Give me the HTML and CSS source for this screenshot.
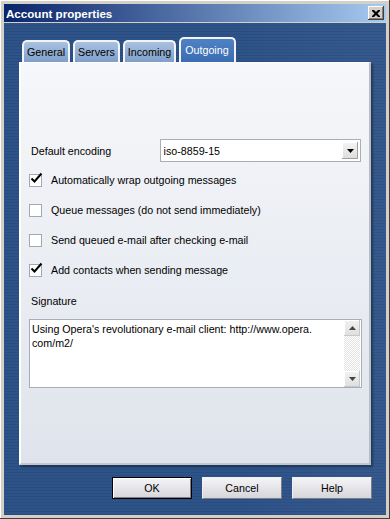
FILE: index.html
```html
<!DOCTYPE html>
<html lang="en">
<head>
  <meta charset="UTF-8">
  <title>Account properties</title>
  <link rel="stylesheet" href="styles.css">
</head>
<body>
  <div class="window">
    <!-- Title bar -->
    <div class="titlebar">
      <span class="title">Account properties</span>
      <button class="close">
        <svg width="8" height="7" viewBox="0 0 8 7"><path d="M0 0h2l2 2 2-2h2v1l-2.5 2.5 2.5 2.5v1h-2l-2-2-2 2h-2v-1l2.5-2.5-2.5-2.5z" fill="#000"/></svg>
      </button>
    </div>

    <div class="client">
      <div class="tabs">
        <div class="tab">General</div>
        <div class="tab">Servers</div>
        <div class="tab">Incoming</div>
        <div class="tab active">Outgoing</div>
      </div>

      <!-- Outgoing page -->
      <div class="panel">
        <div class="encoding">
          <span class="label">Default encoding</span>
          <div class="select">
            <span class="value">iso-8859-15</span>
            <span class="drop"><svg width="7" height="4" viewBox="0 0 7 4"><path d="M0 0h7l-3.5 4z" fill="#000"/></svg></span>
          </div>
        </div>

        <div class="check">
          <span class="box"><svg width="14" height="14" viewBox="0 0 14 14"><path d="M2.5 6.5l3 3 7-8" fill="none" stroke="#000" stroke-width="2"/></svg></span>
          <span>Automatically wrap outgoing messages</span>
        </div>
        <div class="check">
          <span class="box"></span>
          <span>Queue messages (do not send immediately)</span>
        </div>
        <div class="check">
          <span class="box"></span>
          <span>Send queued e-mail after checking e-mail</span>
        </div>
        <div class="check">
          <span class="box"><svg width="14" height="14" viewBox="0 0 14 14"><path d="M2.5 6.5l3 3 7-8" fill="none" stroke="#000" stroke-width="2"/></svg></span>
          <span>Add contacts when sending message</span>
        </div>

        <div class="sig-label">Signature</div>
        <div class="textbox">
          <div class="text">Using Opera's revolutionary e-mail client: http://www.opera.<br>com/m2/</div>
          <div class="scrollbar">
            <span class="arrow"><svg width="7" height="4" viewBox="0 0 7 4"><path d="M0 4h7l-3.5-4z" fill="#444"/></svg></span>
            <span class="track"></span>
            <span class="arrow"><svg width="7" height="4" viewBox="0 0 7 4"><path d="M0 0h7l-3.5 4z" fill="#444"/></svg></span>
          </div>
        </div>
      </div>

      <div class="buttons">
        <button class="btn default">OK</button>
        <button class="btn">Cancel</button>
        <button class="btn">Help</button>
      </div>
    </div>
  </div>
</body>
</html>
```

FILE: styles.css
```css
/* Global styles */
body {
  margin: 0;
  font-family: "Liberation Sans", Arial, sans-serif;
  font-size: 10.7px;
  color: #000;
  background: #d4d0c8;
}

/* Window frame */
.window {
  width: 390px;
  height: 519px;
  box-sizing: border-box;
  padding: 4px;
  background: #d4d0c8;
  box-shadow: inset -1px -1px 0 #404040, inset 1px 1px 0 #ffffff;
  display: flex;
  flex-direction: column;
}

.titlebar {
  height: 18px;
  background: linear-gradient(to right, #0a246a, #a6caf0);
  display: flex;
  align-items: center;
  justify-content: space-between;
  padding: 0 2px 0 2px;
}

.title {
  color: #fff;
  font-weight: bold;
  font-size: 11.6px;
}

.close {
  width: 16px;
  height: 14px;
  padding: 0;
  margin: 0;
  background: #d4d0c8;
  border: none;
  box-shadow: inset -1px -1px 0 #404040, inset 1px 1px 0 #ffffff, inset -2px -2px 0 #808080;
  display: flex;
  align-items: center;
  justify-content: center;
}

/* Blue striped client area */
.client {
  margin-top: 1px;
  height: 492px;
  box-sizing: border-box;
  padding: 14px 15px 0 15px;
  background:
    linear-gradient(to right, rgba(255, 255, 255, 0) 60%, rgba(255, 255, 255, 0.04)),
    repeating-linear-gradient(to bottom, #2e5389 0 2px, #294c7f 2px 3px);
  display: flex;
  flex-direction: column;
}

/* Tabs */
.tabs {
  height: 25px;
  display: flex;
  align-items: flex-end;
  gap: 3px;
  padding-left: 3px;
}

.tab {
  height: 22px;
  box-sizing: border-box;
  padding: 4px 3px 0 3px;
  border: 2px solid #f2f4f8;
  border-bottom: none;
  border-radius: 5px 5px 0 0;
  background: linear-gradient(to bottom, #a9c1df, #7f9fca);
  color: #000;
}

.tab.active {
  height: 25px;
  padding-top: 5px;
  padding-left: 4px;
  padding-right: 5px;
  background: linear-gradient(to bottom, #4f82c4, #3b6cb2);
  color: #fff;
}

/* Property page */
.panel {
  height: 403px;
  box-sizing: border-box;
  padding: 76px 8px 0 8px;
  background: linear-gradient(to bottom, #f6f7fa, #dfe4ec);
  border-top: 1px solid #ffffff;
  border-left: 2px solid #ffffff;
  border-right: 2px solid #b9bec6;
  border-bottom: 2px solid #c2c6cd;
  box-shadow: 2px 2px 2px rgba(0, 0, 0, 0.35);
  display: flex;
  flex-direction: column;
}

.encoding {
  height: 23px;
  display: flex;
  align-items: center;
}

.label {
  width: 129px;
  margin-left: 2px;
}

.select {
  width: 202px;
  height: 23px;
  box-sizing: border-box;
  border: 1px solid #a7aeb8;
  background: #fff;
  display: flex;
  align-items: center;
  justify-content: space-between;
  padding: 0 2px 0 3px;
}

.drop {
  width: 16px;
  height: 17px;
  background: linear-gradient(to bottom, #f4f4f4, #dcdcdc);
  box-shadow: inset -1px -1px 0 #a0a0a0, inset 1px 1px 0 #ffffff;
  display: flex;
  align-items: center;
  justify-content: center;
}

/* Check boxes */
.check {
  height: 30px;
  display: flex;
  align-items: center;
}

.encoding + .check {
  margin-top: 3px;
}

.box {
  width: 13px;
  height: 13px;
  box-sizing: border-box;
  border: 1px solid #9ea8b8;
  background: #fff;
  margin-right: 9px;
  position: relative;
}

.box svg {
  position: absolute;
  left: -1px;
  top: -3px;
}

/* Signature */
.sig-label {
  height: 16px;
  line-height: 16px;
  margin-top: 8px;
  margin-left: 2px;
}

.textbox {
  margin-top: 10px;
  width: 333px;
  height: 69px;
  box-sizing: border-box;
  border: 1px solid #a7aeb8;
  background: #fff;
  display: flex;
}

.text {
  flex: 1;
  padding: 2px 2px;
  line-height: 14px;
}

.scrollbar {
  width: 16px;
  margin: 0 1px 0 0;
  display: flex;
  flex-direction: column;
}

.arrow {
  height: 16px;
  background: linear-gradient(to bottom, #f2f2f2, #dedede);
  box-shadow: inset -1px -1px 0 #c8c8c8, inset 1px 1px 0 #ffffff;
  display: flex;
  align-items: center;
  justify-content: center;
}

.track {
  flex: 1;
  background-color: #fff;
  background-image: repeating-conic-gradient(#e2e2e2 0 25%, #ffffff 0 50%);
  background-size: 2px 2px;
}

/* Dialog buttons */
.buttons {
  margin-top: 12px;
  margin-right: -1px;
  display: flex;
  justify-content: flex-end;
  gap: 10px;
}

.btn {
  width: 80px;
  height: 22px;
  padding: 0;
  font-family: "Liberation Sans", Arial, sans-serif;
  font-size: 10.7px;
  color: #000;
  border: 1px solid #7d7d86;
  border-top-color: #f0f0f0;
  border-left-color: #f0f0f0;
  background: linear-gradient(to bottom, #f4f4f6, #d6d5da);
}

.btn.default {
  border: 1px solid #000;
  box-shadow: inset 1px 1px 0 #ffffff, inset -1px -1px 0 #808088;
}
```
